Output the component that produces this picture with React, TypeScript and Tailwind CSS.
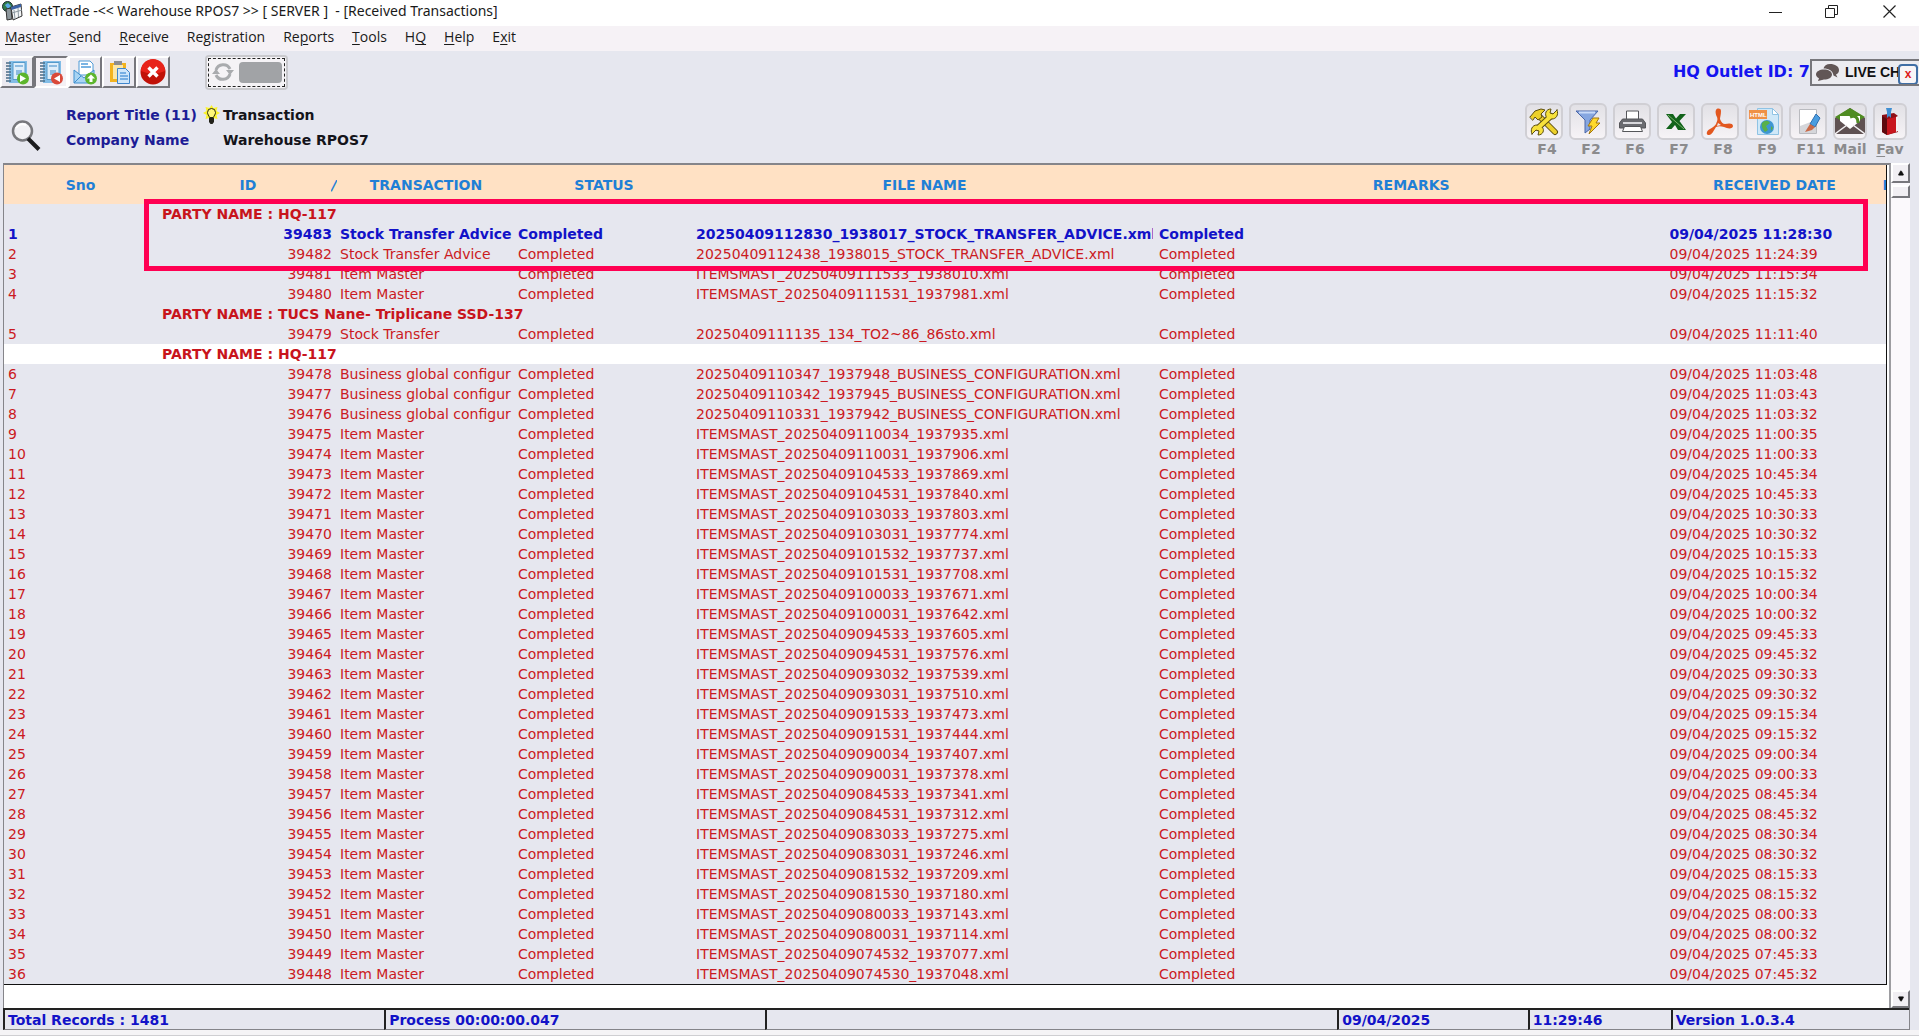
import type { ReactNode } from 'react'
import { Triangle } from 'lucide-react'

type Row = {
  id: number
  transaction: string
  file: string
  time: string
}

type Group = {
  party: string
  white?: boolean
  rows: Row[]
}

const item = (id: number, stamp: string, no: string, time: string): Row => ({
  id,
  transaction: 'Item Master',
  file: `ITEMSMAST_20250409${stamp}_${no}.xml`,
  time,
})

const config = (id: number, stamp: string, no: string, time: string): Row => ({
  id,
  transaction: 'Business global configur',
  file: `20250409${stamp}_${no}_BUSINESS_CONFIGURATION.xml`,
  time,
})

const advice = (id: number, stamp: string, no: string, time: string): Row => ({
  id,
  transaction: 'Stock Transfer Advice',
  file: `20250409${stamp}_${no}_STOCK_TRANSFER_ADVICE.xml`,
  time,
})

const groups: Group[] = [
  {
    party: 'HQ-117',
    rows: [
      advice(39483, '112830', '1938017', '11:28:30'),
      advice(39482, '112438', '1938015', '11:24:39'),
      item(39481, '111533', '1938010', '11:15:34'),
      item(39480, '111531', '1937981', '11:15:32'),
    ],
  },
  {
    party: 'TUCS Nane- Triplicane SSD-137',
    rows: [
      { id: 39479, transaction: 'Stock Transfer', file: '20250409111135_134_TO2~86_86sto.xml', time: '11:11:40' },
    ],
  },
  {
    party: 'HQ-117',
    white: true,
    rows: [
      config(39478, '110347', '1937948', '11:03:48'),
      config(39477, '110342', '1937945', '11:03:43'),
      config(39476, '110331', '1937942', '11:03:32'),
      item(39475, '110034', '1937935', '11:00:35'),
      item(39474, '110031', '1937906', '11:00:33'),
      item(39473, '104533', '1937869', '10:45:34'),
      item(39472, '104531', '1937840', '10:45:33'),
      item(39471, '103033', '1937803', '10:30:33'),
      item(39470, '103031', '1937774', '10:30:32'),
      item(39469, '101532', '1937737', '10:15:33'),
      item(39468, '101531', '1937708', '10:15:32'),
      item(39467, '100033', '1937671', '10:00:34'),
      item(39466, '100031', '1937642', '10:00:32'),
      item(39465, '094533', '1937605', '09:45:33'),
      item(39464, '094531', '1937576', '09:45:32'),
      item(39463, '093032', '1937539', '09:30:33'),
      item(39462, '093031', '1937510', '09:30:32'),
      item(39461, '091533', '1937473', '09:15:34'),
      item(39460, '091531', '1937444', '09:15:32'),
      item(39459, '090034', '1937407', '09:00:34'),
      item(39458, '090031', '1937378', '09:00:33'),
      item(39457, '084533', '1937341', '08:45:34'),
      item(39456, '084531', '1937312', '08:45:32'),
      item(39455, '083033', '1937275', '08:30:34'),
      item(39454, '083031', '1937246', '08:30:32'),
      item(39453, '081532', '1937209', '08:15:33'),
      item(39452, '081530', '1937180', '08:15:32'),
      item(39451, '080033', '1937143', '08:00:33'),
      item(39450, '080031', '1937114', '08:00:32'),
      item(39449, '074532', '1937077', '07:45:33'),
      item(39448, '074530', '1937048', '07:45:32'),
    ],
  },
]

export default function App() {
  return (
    <div className="min-h-screen flex flex-col bg-[#e6e7ef] font-['DejaVu_Sans',sans-serif] text-sm leading-5">
      <TitleBar />
      <MenuBar />
      <Toolbar />
      <ReportHeader />
      <div className="flex-1 flex flex-col pl-[3px] pr-[9px]">
        <div className="flex-1 flex">
          <ReportGrid />
          <ScrollBar />
        </div>
        <StatusBar />
      </div>
      <div className="h-1.5 bg-[#f5f4f6] border-b border-[#cfcfd2]" />
    </div>
  )
}

function TitleBar() {
  return (
    <header className="h-[26px] bg-white flex items-center pl-0.5 pb-1 font-['Noto_Sans',sans-serif] text-[#1a1a1a]">
      <AppIcon />
      <h1 className="ml-1.5 whitespace-pre">{'NetTrade -<< Warehouse RPOS7 >> [ SERVER ]  - [Received Transactions]'}</h1>
      <div className="ml-auto flex pr-1">
        <button type="button" aria-label="Minimize" className="w-14 flex justify-center">
          <svg width="13" height="13" viewBox="0 0 13 13" stroke="#222">
            <path d="M0 7.5h13" />
          </svg>
        </button>
        <button type="button" aria-label="Restore" className="w-14 flex justify-center">
          <svg width="13" height="13" viewBox="0 0 13 13" fill="none" stroke="#222">
            <path d="M.5 3.5h9v9h-9zM3.5 3V.5h9v9H10" />
          </svg>
        </button>
        <button type="button" aria-label="Close" className="w-14 pl-1 flex justify-center">
          <svg width="13" height="13" viewBox="0 0 13 13" stroke="#222" strokeWidth="1.2">
            <path d="M.5.5l12 12M12.5.5l-12 12" />
          </svg>
        </button>
      </div>
    </header>
  )
}

// text before the hot key, the hot key, text after it
const menus = [
  ['', 'M', 'aster'],
  ['', 'S', 'end'],
  ['', 'R', 'eceive'],
  ['Re', 'g', 'istration'],
  ['Re', 'p', 'orts'],
  ['', 'T', 'ools'],
  ['H', 'Q', ''],
  ['', 'H', 'elp'],
  ['E', 'x', 'it'],
]

function MenuBar() {
  return (
    <nav className="h-[25px] bg-[#f6f2f6] pl-[5px] pb-[3px] flex items-center gap-[18px] font-['Open_Sans',sans-serif] text-[#1a1a1a]">
      {menus.map(([before, key, after]) => (
        <button type="button" key={before + key + after}>
          {before}
          <u className="underline-offset-2">{key}</u>
          {after}
        </button>
      ))}
    </nav>
  )
}

function ToolButton({ label, pressed, children }: { label: string; pressed?: boolean; children: ReactNode }) {
  return (
    <button
      type="button"
      aria-label={label}
      className={`w-[34px] h-8 flex items-center justify-center border-2 ${
        pressed
          ? 'bg-[#f4f1f5] border-t-[#77777c] border-l-[#77777c] border-b-white border-r-white'
          : 'bg-[#ebeaf0] border-t-white border-l-white border-b-[#77777c] border-r-[#77777c]'
      }`}
    >
      {children}
    </button>
  )
}

function Toolbar() {
  return (
    <div className="h-10 pt-0.5 flex items-center">
      <div className="flex">
        <ToolButton label="Start log">
          <NotebookIcon badge="#5cb52c" mark="M15 15l6 3.5-6 3.5z" />
        </ToolButton>
        <ToolButton label="Received log" pressed>
          <NotebookIcon badge="#d9493a" mark="M21 15l-6 3.5 6 3.5z" />
        </ToolButton>
        <ToolButton label="Send mail">
          <SendMailIcon />
        </ToolButton>
        <ToolButton label="Paste">
          <ClipboardIcon />
        </ToolButton>
        <ToolButton label="Close report">
          <svg width="26" height="26" viewBox="0 0 26 26">
            <circle cx="13" cy="13" r="12.5" fill="#c11208" />
            <path d="M1 12a12 12 0 0 1 24 0q-12 5-24 0z" fill="#e8231a" />
            <path d="M8.500 8.500l9 9M17.500 8.500l-9 9" stroke="#fff" strokeWidth="3.400" />
          </svg>
        </ToolButton>
      </div>
      <button
        type="button"
        aria-label="Auto refresh"
        className="ml-[35px] w-[83px] h-[35px] rounded border-2 border-[#c9c9cd] bg-[#f5f3f6] p-px"
      >
        <span className="h-full flex items-center justify-between border border-dashed border-[#222] px-0.5">
          <svg width="24" height="24" viewBox="0 0 24 24" fill="none" stroke="#a9abae" strokeWidth="3">
            <path d="M5 10a7.500 7.500 0 0 1 14-1M19 14a7.500 7.500 0 0 1-14 1" />
            <path d="M15 10h8l-4 5zM1 14h8l-4-5z" fill="#a9abae" stroke="none" />
          </svg>
          <span className="w-[43px] h-[21px] rounded-sm bg-[#a1a3a6]" />
        </span>
      </button>
      <div className="ml-auto flex items-center">
        <span className="font-bold text-base text-[#1414f0]">HQ Outlet ID: 7</span>
        <div className="relative w-[109px] h-[27px] border-2 border-r-0 border-[#77777c] bg-[#ececf1] flex items-center pl-1 gap-1.5 overflow-hidden">
          <svg className="shrink-0" width="23" height="17" viewBox="0 0 23 17" fill="#615656">
            <path d="M14 0c5 0 9 2.500 9 6 0 2-1 3.500-3 4.500l1.500 3-4-2C17 7 13 4.500 7.500 4.500 8 2 10.500 0 14 0z" />
            <path d="M8 5.500c4.500 0 8 2 8 5s-3.500 5-8 5L2 17l1-2.800C1 13.200 0 12 0 10.500c0-3 3.500-5 8-5z" />
          </svg>
          <span className="font-['Liberation_Sans',sans-serif] font-bold whitespace-nowrap text-[#111]">LIVE CHAT</span>
          <button
            type="button"
            aria-label="Close chat"
            className="absolute right-px top-[3px] w-5 h-[21px] rounded-sm border-2 border-[#3f6ea5] bg-[#f7f5f7] text-xs leading-4 font-['Liberation_Sans',sans-serif] font-bold text-[#dd1c1c]"
          >
            x
          </button>
        </div>
      </div>
    </div>
  )
}

function FunctionButton({ label, narrow, children }: { label: ReactNode; narrow?: boolean; children: ReactNode }) {
  return (
    <button type="button" className={`flex flex-col items-center ${narrow ? 'w-[34px]' : 'w-[38px]'}`}>
      <span className="w-full h-[37px] flex items-center justify-center rounded-md border-2 border-[#d0cfd4] bg-gradient-to-b from-[#e2e1e6] to-[#f6f3f6]">
        {children}
      </span>
      <span className={`font-bold leading-[18px] text-[#8b8b8d] whitespace-nowrap ${narrow ? '' : 'pl-1.5'}`}>{label}</span>
    </button>
  )
}

function ReportHeader() {
  return (
    <div className="h-[72px] flex items-start">
      <svg className="ml-[11px] mt-[29px]" width="30" height="31" viewBox="0 0 30 31" fill="none">
        <circle cx="11.500" cy="11" r="9.500" fill="#f2f2f5" stroke="#77787c" strokeWidth="2.500" />
        <path d="M5 8a8 8 0 0 1 10-3" stroke="#fff" strokeWidth="2" />
        <path d="M17 18.500L28 29.500" stroke="#1c1c1e" strokeWidth="4" />
      </svg>
      <dl className="ml-[25px] mt-3.5 grid grid-cols-[157px_auto] gap-y-[5px] font-bold">
        <dt className="flex items-start text-[#1d1d96] whitespace-nowrap">
          Report Title (11)
          <BulbIcon />
        </dt>
        <dd className="text-[#14141a]">Transaction</dd>
        <dt className="text-[#1d1d96]">Company Name</dt>
        <dd className="text-[#14141a]">Warehouse RPOS7</dd>
      </dl>
      <div className="ml-auto mt-3 mr-3 flex gap-1.5">
        <FunctionButton label="F4">
          <ToolsIcon />
        </FunctionButton>
        <FunctionButton label="F2">
          <FilterIcon />
        </FunctionButton>
        <FunctionButton label="F6">
          <PrinterIcon />
        </FunctionButton>
        <FunctionButton label="F7">
          <svg width="22" height="18" viewBox="0 0 22 18" fill="#11631a">
            <path d="M1 1h7l3 4.500L15 1h6l-6.500 7L21 17h-8l-3-5-3.500 4H1l6-7z" />
            <path d="M3 2l16 14" stroke="#7cb06a" />
          </svg>
        </FunctionButton>
        <FunctionButton label="F8">
          <svg width="28" height="28" viewBox="0 0 28 28" fill="#e2571f">
            <path d="M10 2c1-2 5-2 5 1 0 4-1 6-1 8 1 3 3 5 5 5 4-1 8-1 8 2s-5 3-9 1c-3-1-6-1-8 0-2 3-4 8-7 8-4 0-2-5 1-6 3-2 5-3 6-5 1-3 2-4 1-7-1-2-2-5-1-7zm2 13l-1 3 4-1z" fillRule="evenodd" />
          </svg>
        </FunctionButton>
        <FunctionButton label="F9">
          <HtmlIcon />
        </FunctionButton>
        <FunctionButton label="F11">
          <EditIcon />
        </FunctionButton>
        <FunctionButton label="Mail" narrow>
          <MailIcon />
        </FunctionButton>
        <FunctionButton
          label={
            <>
              <u className="underline-offset-2">F</u>av
            </>
          }
          narrow
        >
          <BookIcon />
        </FunctionButton>
      </div>
    </div>
  )
}

function ReportGrid() {
  let sno = 0
  return (
    <main className="relative flex-1 min-w-0 bg-white border-t-2 border-l border-[#85858a] border-r-2 border-r-[#9d9da1] pr-0.5">
      <table className="w-full table-fixed border-collapse bg-[#e6e7ef] border-r border-b border-[#111] text-[#cb1a22]">
        <colgroup>
          <col className="w-[153px]" />
          <col className="w-[180px]" />
          <col className="w-[178px]" />
          <col className="w-[178px]" />
          <col className="w-[463px]" />
          <col />
          <col className="w-[216px]" />
          <col className="w-1" />
        </colgroup>
        <thead>
          <tr className="h-[39px] bg-[#ffe1c4] text-[#1f7fd6]">
            <th>Sno</th>
            <th>
              <span className="flex">
                <span className="flex-1 pl-2">ID</span>
                <span className="w-1.5 overflow-hidden italic">/</span>
              </span>
            </th>
            <th>TRANSACTION</th>
            <th>STATUS</th>
            <th>FILE NAME</th>
            <th>REMARKS</th>
            <th>RECEIVED DATE</th>
            <th className="overflow-hidden text-left">I</th>
          </tr>
        </thead>
        <tbody>
          {groups.map((group, i) => [
            <tr key={`g${i}`} className={group.white ? 'h-5 bg-white' : 'h-5'}>
              <td />
              <td colSpan={7} className="pl-[5px] font-bold text-[#c8141c]">
                PARTY NAME : {group.party}
              </td>
            </tr>,
            ...group.rows.map((row) => {
              sno += 1
              return (
                <tr key={row.id} className={sno === 1 ? 'h-5 font-bold text-[#1212c8]' : 'h-5'}>
                  <td className="pl-1">{sno}</td>
                  <td className="pr-[5px] text-right">{row.id}</td>
                  <Cell>{row.transaction}</Cell>
                  <Cell>Completed</Cell>
                  <Cell>{row.file}</Cell>
                  <Cell>Completed</Cell>
                  <Cell>09/04/2025 {row.time}</Cell>
                  <td />
                </tr>
              )
            }),
          ])}
        </tbody>
      </table>
      <div className="pointer-events-none absolute left-[140px] right-[21px] top-[34px] h-[72px] border-[5px] border-[#ff0052]" />
    </main>
  )
}

function Cell({ children }: { children: ReactNode }) {
  return (
    <td className="px-[3px]">
      <div className="overflow-hidden whitespace-nowrap">{children}</div>
    </td>
  )
}

function ScrollBar() {
  const raised = 'w-full flex items-center justify-center bg-[#f1eff3] border-2 border-t-white border-l-white border-b-[#77777c] border-r-[#77777c]'
  return (
    <div className="w-[19px] flex flex-col bg-[#fbf9fc]">
      <button type="button" aria-label="Scroll up" className={`h-5 ${raised}`}>
        <Triangle size={6} fill="#111" />
      </button>
      <div className={`mt-0.5 h-[13px] ${raised}`} />
      <button type="button" aria-label="Scroll down" className={`mt-auto h-[18px] ${raised}`}>
        <Triangle size={6} fill="#111" className="rotate-180" />
      </button>
    </div>
  )
}

function StatusBar() {
  const panel = 'h-[22px] pl-[3px] border-t-2 border-l-2 border-b border-t-[#222] border-l-[#222] border-b-[#85858a] overflow-hidden whitespace-nowrap'
  return (
    <footer className="flex font-bold leading-5 text-[#1212c8] border-r border-[#85858a]">
      <div className={`w-[20%] ${panel}`}>Total Records : 1481</div>
      <div className={`w-[20%] ${panel}`}>Process 00:00:00.047</div>
      <div className={`w-[30%] ${panel}`} />
      <div className={`w-[10%] ${panel}`}>09/04/2025</div>
      <div className={`w-[143px] ${panel}`}>11:29:46</div>
      <div className={`flex-1 ${panel}`}>Version 1.0.3.4</div>
    </footer>
  )
}

function AppIcon() {
  return (
    <svg width="21" height="20" viewBox="0 0 21 20">
      <circle cx="5.500" cy="5.500" r="5" fill="#2f7d4a" stroke="#1b2b33" />
      <path d="M3 4l3-2 3 3-3 3z" fill="#5aa9e6" />
      <path d="M4 8l5-1 1 11-5 1z" fill="#8d979c" stroke="#333" />
      <path d="M9 6l10-3 1 12-9 4z" fill="#f3f5f6" stroke="#333" />
      <path d="M9 6l10-3v3L9.500 9z" fill="#3b63a8" />
      <path d="M12 9l1 9M16 7l.5 9M10 12l10-3" stroke="#8c98a0" />
    </svg>
  )
}

function NotebookIcon({ badge, mark }: { badge: string; mark: string }) {
  return (
    <svg width="25" height="25" viewBox="0 0 25 25">
      <path d="M4 1h18v22H4z" fill="#83bde6" />
      <path d="M8 2.500h12v17H8z" fill="#dfeefa" stroke="#559acb" />
      <path d="M10 5h8v2h-8zM11 10h6v5h-6z" fill="#8dbbe0" />
      <path d="M1 3h5M1 6h5M1 9h5M1 12h5M1 15h5M1 18h5M1 21h5" stroke="#4b6c86" strokeWidth="1.500" />
      <circle cx="18" cy="18.500" r="6" fill={badge} />
      <path d={mark} fill="#fff" />
    </svg>
  )
}

function SendMailIcon() {
  return (
    <svg width="25" height="25" viewBox="0 0 25 25">
      <path d="M6 1h11l3 3v11H6z" fill="#fff" stroke="#4d9ad6" />
      <path d="M8 4h7M8 7h10" stroke="#7ab4e3" strokeWidth="2" />
      <path d="M1 10l10 8 10-8v13H1z" fill="#a8d4f3" stroke="#3f8fcf" />
      <path d="M1 23l7-7M21 23l-6-7" stroke="#3f8fcf" />
      <circle cx="18" cy="18.500" r="6" fill="#5cb52c" />
      <path d="M18 14.500l4 4h-2.500V22h-3v-3.500H14z" fill="#fff" />
    </svg>
  )
}

function ClipboardIcon() {
  return (
    <svg width="23" height="25" viewBox="0 0 23 25">
      <path d="M2 3h16v19H2z" fill="#f2b31f" />
      <path d="M5 5h10v14H5z" fill="#fbe7a8" />
      <path d="M6 1h8v4H6z" fill="#8b8d92" />
      <path d="M9.500 8.500h8l4 4v11h-12z" fill="#cfe6fa" stroke="#3f86cc" />
      <path d="M12 13h6M12 16h8M12 19h8" stroke="#5b9ddb" strokeWidth="1.500" />
    </svg>
  )
}

function BulbIcon() {
  return (
    <svg width="17" height="20" viewBox="0 0 17 20" className="ml-1.5">
      <path d="M8.500 0l2 3 4-1-1 4 3.500 2-3.500 2 1 4-4-1-2 2-2-2-4 1 1-4L0 8l3.500-2-1-4 4 1z" fill="#fbf32a" />
      <path d="M6.500 12.500C6 10.500 4.500 9.500 4.500 7.500a4 4 0 0 1 8 0c0 2-1.500 3-2 5z" fill="#fdf77a" stroke="#2b2b10" />
      <path d="M6 13h5v4l-1.500 2h-2L6 17z" fill="#22221a" />
    </svg>
  )
}

function ToolsIcon() {
  return (
    <svg width="31" height="28" viewBox="0 0 31 28" strokeLinejoin="round" strokeLinecap="round" fill="none">
      <path d="M10 8l16 16" stroke="#5c4e10" strokeWidth="6" />
      <path d="M10 8l16 16" stroke="#ecd02a" strokeWidth="4" />
      <path d="M1 9l5-6 6-2 4 1-4 4 1 3-4 3-3-3-2 3z" fill="#ecd02a" stroke="#5c4e10" />
      <path d="M9 20L22 8" stroke="#5c4e10" strokeWidth="6" />
      <path d="M28 2l-4 4-3-1 1-4c-5 0-7 5-4 9l5 1c4 0 7-4 5-9z" fill="#f7e13c" stroke="#5c4e10" />
      <path d="M3 26l4-4 3 1-1 4c5 0 7-5 4-8l-5-2c-5 0-7 5-5 9z" fill="#f7e13c" stroke="#5c4e10" />
      <path d="M10 19L21 9" stroke="#f7e13c" strokeWidth="4" />
    </svg>
  )
}

function FilterIcon() {
  return (
    <svg width="26" height="26" viewBox="0 0 26 26">
      <path d="M1 2h22l-8 9v9l-5 4V11z" fill="#86a6e0" stroke="#4a66a8" />
      <path d="M4 3.500h16" stroke="#c9daf8" strokeWidth="2" />
      <path d="M18 9h6l-3 5h4L14 25l3-8h-4z" fill="#ffd92b" stroke="#a3760f" />
    </svg>
  )
}

function PrinterIcon() {
  return (
    <svg width="27" height="23" viewBox="0 0 27 23" stroke="#55565a">
      <path d="M7.500 1h12v9h-12z" fill="#fff" />
      <path d="M3.500 9h20l3 4v5h-26v-5z" fill="#6a6b70" />
      <path d="M4 13h19" stroke="#d8d8dc" strokeWidth="2" />
      <path d="M5.500 16.500h16l2 5h-20z" fill="#fff" />
    </svg>
  )
}

function HtmlIcon() {
  return (
    <svg width="32" height="29" viewBox="0 0 32 29">
      <path d="M9.500 1.500h15l6 6v20h-21z" fill="#cfe8f8" stroke="#8fc3e4" />
      <path d="M24.500 1.500v6h6z" fill="#fff" stroke="#8fc3e4" />
      <path d="M1 3h18v9H1z" fill="#ef9146" />
      <text x="2" y="10" fontSize="6" fontWeight="bold" fontFamily="Liberation Sans" fill="#fff">
        HTML
      </text>
      <circle cx="19" cy="20" r="7" fill="#3e97d3" />
      <path d="M14 16c3-3 6-3 8 0l-4 3 2 4-3 2c-2-3-4-5-3-9zM23 19l2 2-2 3z" fill="#58b04a" />
    </svg>
  )
}

function EditIcon() {
  return (
    <svg width="25" height="28" viewBox="0 0 25 28">
      <path d="M3.500 1.500h17v24h-17z" fill="#fff" stroke="#b9babf" />
      <path d="M4 18l16-6v13H4z" fill="#d5d6da" />
      <path d="M20 6l4 4-5 9-5-3z" fill="#4a9de0" stroke="#2f6fb0" />
      <path d="M14 16l5 3-3 3-7 2z" fill="#c96a48" />
    </svg>
  )
}

function MailIcon() {
  return (
    <svg width="30" height="27" viewBox="0 0 30 27">
      <path d="M0 10L15 0l15 10v16H0z" fill="#5f5152" />
      <path d="M0 9L15 0l15 9-5 3H5z" fill="#4f8c22" />
      <path d="M5 8h20v5l-10 8L5 13z" fill="#fff" />
      <path d="M15 9c5-2 8 0 8 6" fill="none" stroke="#4f8c22" strokeWidth="3" />
      <path d="M0 26l12-9M30 26l-12-9" stroke="#f3f1f3" strokeWidth="1.500" />
    </svg>
  )
}

function BookIcon() {
  return (
    <svg width="20" height="30" viewBox="0 0 20 30">
      <path d="M2 8l12-2 4 3v16l-11 3-5-3z" fill="#8e1016" />
      <path d="M2 9l5 3v16l-5-3z" fill="#5e0a0e" />
      <path d="M7 12l9-2v15l-9 3z" fill="#c8161e" />
      <path d="M16 10l2-1v15l-2 1z" fill="#f2f2f2" />
      <path d="M6 1h6l-1 4v6l-2-2-2 2V5z" fill="#3f8fd2" />
    </svg>
  )
}
